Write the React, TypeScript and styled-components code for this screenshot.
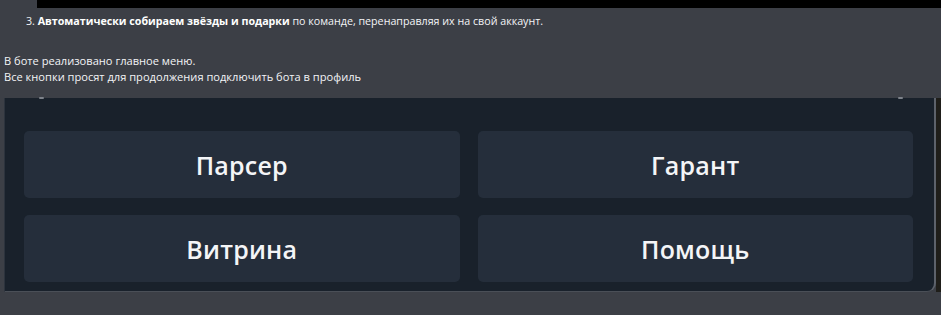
import React from 'react'
import styled, { createGlobalStyle } from 'styled-components'

const GlobalStyle = createGlobalStyle`
  html, body {
    margin: 0;
    padding: 0;
    background: #3c3f46;
  }
  body {
    width: 941px;
    height: 315px;
    overflow: hidden;
    font-family: 'Open Sans', 'Noto Sans', sans-serif;
    color: #f2f3f5;
  }
`

const Page = styled.div`
  display: flex;
  flex-direction: column;
  width: 941px;
  height: 315px;
  background: #3c3f46;
`

const TopBar = styled.div`
  margin-left: 37px;
  height: 8px;
  background: #000;
`

const Step = styled.p`
  margin: 0;
  padding: 5px 0 0 26px;
  font-size: 10.7px;
  line-height: 16px;
  color: #f3f4f6;

  b {
    font-weight: 700;
    color: #fff;
  }
`

const Note = styled.div`
  margin-top: 24px;
  padding-left: 4px;
  font-size: 11.1px;
  line-height: 16px;
  color: #f3f4f6;
`

const PanelRow = styled.div`
  display: flex;
  margin-top: 13px;
  height: 194px;
`

const Panel = styled.div`
  position: relative;
  margin-left: 4px;
  width: 932px;
  box-sizing: border-box;
  padding: 33px 21px 10px 19px;
  background: #19212b;
  border-left: 1px solid #2c333d;
  border-right: 2px solid #5d626b;
  border-bottom: 1px solid #4a4f57;
  border-bottom-right-radius: 9px;
  display: grid;
  grid-template-columns: 1fr 1fr;
  grid-template-rows: 67px 67px;
  column-gap: 18px;
  row-gap: 17px;
`

const Edge = styled.div`
  flex: 1;
  background: #1f1e1a;
`

const Tick = styled.span<{ left: number }>`
  position: absolute;
  top: -1px;
  left: ${p => p.left}px;
  width: 5px;
  height: 2px;
  border-radius: 1px;
  background: #7d828a;
`

const MenuButton = styled.div`
  display: flex;
  align-items: center;
  justify-content: center;
  background: #252e3b;
  border-radius: 5px;
  font-size: 25px;
  font-weight: 600;
  color: #f4f5f7;
  letter-spacing: 0.2px;
`

const buttons = ['Парсер', 'Гарант', 'Витрина', 'Помощь']

export default function App() {
  return (
    <>
      <GlobalStyle />
      <Page>
        <TopBar />
        <Step>
          3. <b>Автоматически собираем звёзды и подарки</b> по команде, перенаправляя их на свой аккаунт.
        </Step>
        <Note>
          В боте реализовано главное меню.
          <br />
          Все кнопки просят для продолжения подключить бота в профиль
        </Note>
        <PanelRow>
          <Panel>
            <Tick left={34} />
            <Tick left={893} />
            {buttons.map(label => (
              <MenuButton key={label}>{label}</MenuButton>
            ))}
          </Panel>
          <Edge />
        </PanelRow>
      </Page>
    </>
  )
}
